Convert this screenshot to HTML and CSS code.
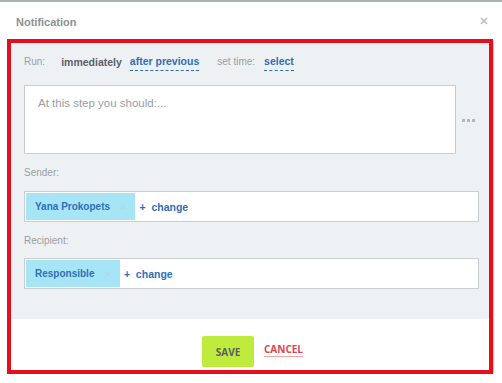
FILE: index.html
```html
<!DOCTYPE html>
<html>
<head>
<meta charset="utf-8">
<link rel="stylesheet" href="styles.css">
</head>
<body>
<div class="topstrip"></div>
<div class="header">
  <span class="title">Notification</span>
  <svg class="close" width="8" height="8" viewBox="0 0 8 8"><path d="M1 1L7 7M7 1L1 7" stroke="#b9bdc1" stroke-width="1.6"/></svg>
</div>
<div class="frame">
  <div class="body">
    <div class="run-row">
      <span class="label">Run:</span>
      <span class="opt-active">immediately</span>
      <span class="link">after previous</span>
      <span class="label settime">set time:</span>
      <span class="link">select</span>
    </div>
    <div class="text-row">
      <div class="textarea">At this step you should:...</div>
      <div class="dots"><i></i><i></i><i></i></div>
    </div>
    <div class="field-label first">Sender:</div>
    <div class="picker">
      <span class="tag">Yana Prokopets<span class="tag-x">×</span></span>
      <span class="change">+ &nbsp;change</span>
    </div>
    <div class="field-label">Recipient:</div>
    <div class="picker picker2">
      <span class="tag">Responsible<span class="tag-x">×</span></span>
      <span class="change">+ &nbsp;change</span>
    </div>
  </div>
  <div class="footer">
    <button class="save">SAVE</button>
    <span class="cancel">CANCEL</span>
  </div>
</div>
</body>
</html>
```
FILE: styles.css
```css
html, body {
  margin: 0;
  padding: 0;
  background: #ffffff;
  font-family: "Liberation Sans", Arial, sans-serif;
}
.topstrip {
  height: 2px;
  background: #a9b1b5;
}
.header {
  height: 37px;
  display: flex;
  align-items: center;
  justify-content: space-between;
  padding: 0 14px 0 16px;
  box-sizing: border-box;
}
.title {
  font-size: 11px;
  font-weight: bold;
  color: #8d9196;
  margin-top: 2px;
}
.close {
  margin-top: 1px;
}
.frame {
  margin: 0 9px 0 7px;
  border: 4px solid #e30f1c;
  box-shadow: 1px 1px 1px rgba(120,120,120,0.35);
}
.body {
  background: #eef1f4;
  padding: 11px 10px 30px 13px;
}
.run-row {
  display: flex;
  align-items: flex-start;
  height: 16px;
  line-height: 16px;
}
.label {
  font-size: 10px;
  color: #9a9ea3;
}
.opt-active {
  font-size: 10.5px;
  font-weight: bold;
  color: #5c6068;
  margin-left: 16px;
}
.link {
  font-size: 10.5px;
  font-weight: bold;
  color: #2f6fba;
  border-bottom: 1px dashed #2f6fba;
  line-height: 15px;
  padding-bottom: 1px;
  margin-left: 8px;
}
.settime {
  margin-left: 18px;
}
.settime + .link {
  margin-left: 9px;
}
.text-row {
  display: flex;
  align-items: center;
  margin-top: 15px;
}
.textarea {
  width: 432px;
  height: 69px;
  box-sizing: border-box;
  background: #ffffff;
  border: 1px solid #c9ced2;
  padding: 10px 13px;
  font-size: 11.5px;
  color: #9a9ea3;
  line-height: 14px;
}
.dots {
  display: flex;
  gap: 2px;
  margin-left: 6px;
  margin-top: 1px;
}
.dots i {
  width: 3px;
  height: 3px;
  background: #b4b8bd;
  display: block;
}
.field-label {
  font-size: 10px;
  color: #9a9ea3;
  line-height: 14px;
  margin-top: 12px;
  margin-bottom: 11px;
}
.picker {
  width: 455px;
  height: 31px;
  box-sizing: border-box;
  background: #ffffff;
  border: 1px solid #c9ced2;
  padding: 1px;
  display: flex;
  align-items: stretch;
}
.picker2 {
  margin-top: -1px;
}
.tag {
  background: #a6e5f5;
  color: #2f6fba;
  font-size: 10px;
  font-weight: bold;
  display: flex;
  align-items: center;
  padding: 0 9px 0 9px;
}
.tag-x {
  color: #b3d6e2;
  font-weight: normal;
  font-size: 11px;
  margin-left: 10px;
}
.change {
  font-size: 10.5px;
  font-weight: bold;
  color: #2f6fba;
  display: flex;
  align-items: center;
  margin-left: 4px;
  white-space: pre;
}
.footer {
  background: #ffffff;
  height: 51px;
  display: flex;
  justify-content: center;
  align-items: flex-start;
  padding-top: 17px;
  box-sizing: border-box;
  gap: 10px;
  padding-left: 5px;
}
.save {
  width: 52px;
  height: 31px;
  border: none;
  border-radius: 2px;
  background: #bfeb3c;
  color: #5a5e6b;
  font-family: "Open Sans", sans-serif;
  font-weight: bold;
  font-size: 10px;
  padding: 0;
  margin: 0;
}
.cancel {
  font-family: "Open Sans", sans-serif;
  font-weight: bold;
  font-size: 10px;
  color: #d9474f;
  margin-top: 6px;
  line-height: 14px;
  border-bottom: 1px solid #f2a5a8;
}
```
